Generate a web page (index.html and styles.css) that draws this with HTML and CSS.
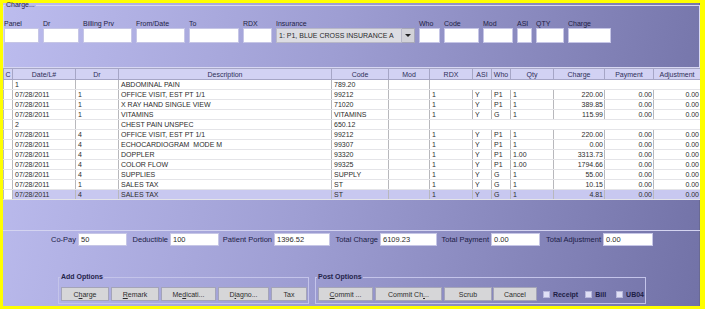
FILE: index.html
```html
<!DOCTYPE html>
<html>
<head>
<meta charset="utf-8">
<link rel="stylesheet" href="styles.css">
</head>
<body>
<div class="app">
  <fieldset class="charge">
    <legend>Charge...</legend>
    <div class="fields">
      <div class="f w-panel"><label>Panel</label><div class="inp"></div></div>
      <div class="f w-dr"><label>Dr</label><div class="inp"></div></div>
      <div class="f w-bill"><label>Billing Prv</label><div class="inp"></div></div>
      <div class="f w-from"><label>From/Date</label><div class="inp"></div></div>
      <div class="f w-to"><label>To</label><div class="inp"></div></div>
      <div class="f w-rdx"><label>RDX</label><div class="inp"></div></div>
      <div class="f w-ins"><label>Insurance</label>
        <div class="combo"><span class="combo-text">1: P1, BLUE CROSS INSURANCE A</span><span class="combo-btn"><span class="tri"></span></span></div>
      </div>
      <div class="f w-who"><label>Who</label><div class="inp"></div></div>
      <div class="f w-code"><label>Code</label><div class="inp"></div></div>
      <div class="f w-mod"><label>Mod</label><div class="inp"></div></div>
      <div class="f w-asi"><label>ASI</label><div class="inp"></div></div>
      <div class="f w-qty"><label>QTY</label><div class="inp"></div></div>
      <div class="f w-chg"><label>Charge</label><div class="inp"></div></div>
    </div>
  </fieldset>

  <div class="gridpane">
    <table class="grid">
      <colgroup>
        <col class="c-c"><col class="c-date"><col class="c-dr"><col class="c-desc"><col class="c-code"><col class="c-mod"><col class="c-rdx"><col class="c-asi"><col class="c-who"><col class="c-qty"><col class="c-chg"><col class="c-pay"><col class="c-adj">
      </colgroup>
      <thead>
        <tr><th>C</th><th>Date/L#</th><th>Dr</th><th>Description</th><th>Code</th><th>Mod</th><th>RDX</th><th>ASI</th><th>Who</th><th>Qty</th><th>Charge</th><th>Payment</th><th>Adjustment</th></tr>
      </thead>
      <tbody>
        <tr><td></td><td>1</td><td></td><td>ABDOMINAL PAIN</td><td>789.20</td><td></td><td colspan="7"></td></tr>
        <tr><td></td><td>07/28/2011</td><td>1</td><td>OFFICE VISIT, EST PT 1/1</td><td>99212</td><td></td><td>1</td><td>Y</td><td>P1</td><td>1</td><td class="n">220.00</td><td class="n">0.00</td><td class="n">0.00</td></tr>
        <tr><td></td><td>07/28/2011</td><td>1</td><td>X RAY HAND SINGLE VIEW</td><td>71020</td><td></td><td>1</td><td>Y</td><td>P1</td><td>1</td><td class="n">389.85</td><td class="n">0.00</td><td class="n">0.00</td></tr>
        <tr><td></td><td>07/28/2011</td><td>1</td><td>VITAMINS</td><td>VITAMINS</td><td></td><td>1</td><td>Y</td><td>G</td><td>1</td><td class="n">115.99</td><td class="n">0.00</td><td class="n">0.00</td></tr>
        <tr><td></td><td>2</td><td></td><td>CHEST PAIN UNSPEC</td><td>650.12</td><td></td><td colspan="7"></td></tr>
        <tr><td></td><td>07/28/2011</td><td>4</td><td>OFFICE VISIT, EST PT 1/1</td><td>99212</td><td></td><td>1</td><td>Y</td><td>P1</td><td>1</td><td class="n">220.00</td><td class="n">0.00</td><td class="n">0.00</td></tr>
        <tr><td></td><td>07/28/2011</td><td>4</td><td>ECHOCARDIOGRAM&nbsp; MODE M</td><td>99307</td><td></td><td>1</td><td>Y</td><td>P1</td><td>1</td><td class="n">0.00</td><td class="n">0.00</td><td class="n">0.00</td></tr>
        <tr><td></td><td>07/28/2011</td><td>4</td><td>DOPPLER</td><td>93320</td><td></td><td>1</td><td>Y</td><td>P1</td><td>1.00</td><td class="n">3313.73</td><td class="n">0.00</td><td class="n">0.00</td></tr>
        <tr><td></td><td>07/28/2011</td><td>4</td><td>COLOR FLOW</td><td>99325</td><td></td><td>1</td><td>Y</td><td>P1</td><td>1.00</td><td class="n">1794.66</td><td class="n">0.00</td><td class="n">0.00</td></tr>
        <tr><td></td><td>07/28/2011</td><td>4</td><td>SUPPLIES</td><td>SUPPLY</td><td></td><td>1</td><td>Y</td><td>G</td><td>1</td><td class="n">55.00</td><td class="n">0.00</td><td class="n">0.00</td></tr>
        <tr><td></td><td>07/28/2011</td><td>1</td><td>SALES TAX</td><td>ST</td><td></td><td>1</td><td>Y</td><td>G</td><td>1</td><td class="n">10.15</td><td class="n">0.00</td><td class="n">0.00</td></tr>
        <tr class="sel"><td class="c"></td><td>07/28/2011</td><td>4</td><td>SALES TAX</td><td>ST</td><td></td><td>1</td><td>Y</td><td>G</td><td>1</td><td class="n">4.81</td><td class="n">0.00</td><td class="n">0.00</td></tr>
      </tbody>
    </table>
  </div>

  <div class="totals">
    <span class="spacer"></span>
    <label>Co-Pay</label><div class="val">50</div>
    <label>Deductible</label><div class="val">100</div>
    <label>Patient Portion</label><div class="val">1396.52</div>
    <label>Total Charge</label><div class="val">6109.23</div>
    <label>Total Payment</label><div class="val">0.00</div>
    <label>Total Adjustment</label><div class="val">0.00</div>
  </div>

  <div class="options">
    <fieldset class="grp add">
      <legend>Add Options</legend>
      <button class="btn b-charge">C<u>h</u>arge</button>
      <button class="btn b-remark"><u>R</u>emark</button>
      <button class="btn b-med">Me<u>d</u>icati...</button>
      <button class="btn b-diag">D<u>i</u>agno...</button>
      <button class="btn b-tax">Tax</button>
    </fieldset>
    <fieldset class="grp post">
      <legend>Post Options</legend>
      <button class="btn b-commit"><u>C</u>ommit ...</button>
      <button class="btn b-commitch">Commit Ch<u>.</u>..</button>
      <button class="btn b-scrub">Scrub</button>
      <button class="btn b-cancel">Cancel</button>
      <span class="cb cb-receipt"><span class="box"></span>Receipt</span>
      <span class="cb cb-bill"><span class="box"></span>Bill</span>
      <span class="cb cb-ub"><span class="box"></span>UB04</span>
    </fieldset>
  </div>
</div>
</body>
</html>
```
FILE: styles.css
```css
* { box-sizing: border-box; }
html, body { margin: 0; padding: 0; }
body {
  width: 705px;
  height: 309px;
  overflow: hidden;
  font-family: "Liberation Sans", Arial, sans-serif;
  font-size: 7px;
  color: #1e1e44;
}
.app {
  width: 705px;
  height: 309px;
  border: 3px solid #ffff00;
  border-right-width: 5px;
  background: linear-gradient(100deg, #bcbcee 0%, #9e9ed3 45%, #7272a7 100%);
  box-shadow: inset -1px 0 0 #6a6a92;
  display: flex;
  flex-direction: column;
}

/* Charge fieldset */
.charge {
  margin: -2px 0 0 0;
  padding: 11px 0 0 0;
  height: 67px;
  border: 1px solid #d8d8f2;
  min-width: 0;
  flex: none;
}
.charge legend {
  padding: 0 1px;
  margin-left: 1px;
  line-height: 8px;
  font-size: 7px;
  color: #24244a;
}
.fields { display: flex; gap: 4px; }
.f { display: flex; flex-direction: column; }
.f label { line-height: 8px; height: 8px; white-space: nowrap; }
.inp { height: 15px; background: #fff; border: 1px solid #c6c6e6; }
.w-panel { width: 35px; }
.w-dr { width: 36px; }
.w-bill { width: 49px; }
.w-from { width: 49px; }
.w-to { width: 50px; }
.w-rdx { width: 29px; }
.w-ins { width: 139px; }
.w-who { width: 21px; }
.w-code { width: 35px; }
.w-mod { width: 30px; }
.w-asi { width: 15px; }
.w-qty { width: 28px; }
.w-chg { width: 43px; }
.combo { height: 15px; display: flex; }
.combo-text {
  flex: 1;
  background: #dcdce2;
  border: 1px solid #b8b8c8;
  line-height: 13px;
  padding-left: 2px;
  color: #2a2a2a;
  white-space: nowrap;
  overflow: hidden;
}
.combo-btn {
  width: 13px;
  background: #d2d2d8;
  border: 1px solid #a8a8b8;
  border-left: none;
  display: flex;
  align-items: center;
  justify-content: center;
}
.tri {
  width: 0; height: 0;
  border-left: 3px solid transparent;
  border-right: 3px solid transparent;
  border-top: 3px solid #222;
}

/* Grid */
.gridpane {
  height: 163px;
  border-bottom: 1px solid #d4d4f0;
  flex: none;
  overflow: hidden;
}
.grid {
  border-collapse: collapse;
  table-layout: fixed;
  width: 697px;
}
.c-c { width: 9px; }
.c-date { width: 63px; }
.c-dr { width: 43px; }
.c-desc { width: 213px; }
.c-code { width: 57px; }
.c-mod { width: 41px; }
.c-rdx { width: 43px; }
.c-asi { width: 19px; }
.c-who { width: 19px; }
.c-qty { width: 43px; }
.c-chg { width: 51px; }
.c-pay { width: 49px; }
.c-adj { width: 47px; }
.grid th {
  height: 11px;
  padding: 0;
  background: #d2d2f3;
  border: 1px solid #a6a6c6;
  font-weight: normal;
  font-size: 7px;
  line-height: 9px;
  color: #2e2e58;
  text-align: center;
  white-space: nowrap;
  overflow: hidden;
}
.grid td {
  height: 10px;
  padding: 0 0 0 2px;
  line-height: 9px;
  background: #fff;
  border-left: 1px solid #b8b8bc;
  border-right: 1px solid #b8b8bc;
  border-bottom: 1px solid #e4e4e8;
  color: #2c2c2c;
  white-space: nowrap;
  overflow: hidden;
}
.grid td.n { text-align: right; padding: 0 1px 0 0; }
.grid tr.sel td { background: #c8c8f0; }
.grid tr.sel td.c { background: #fff; }

/* Totals */
.totals {
  display: grid;
  grid-template-columns: 42px 33px 49px 43px 49px 55px 56px 50px 57px 54px 49px 63px 50px;
  margin-top: 2px;
  height: 13px;
  align-items: center;
  flex: none;
}
.totals label {
  justify-self: end;
  margin-right: 2px;
  font-size: 7.5px;
  white-space: nowrap;
  color: #1c1c46;
}
.totals .val {
  height: 13px;
  background: #fff;
  border: 1px solid #c6c6e6;
  padding-left: 2px;
  line-height: 11px;
  font-size: 7.5px;
  color: #2c2c2c;
}

/* Options */
.options {
  display: flex;
  gap: 6px;
  margin-top: 27px;
  padding-left: 55px;
  flex: none;
}
.grp {
  margin: 0;
  padding: 6px 1px 1px 2px;
  height: 31px;
  border: 1px solid #c4c4ea;
  display: flex;
  align-items: flex-start;
  gap: 2px;
  min-width: 0;
}
.grp legend {
  font-weight: bold;
  line-height: 8px;
  padding: 0 1px;
  margin-left: -1px;
  color: #24244a;
}
.add { width: 251px; }
.post { width: 331px; }
.btn {
  height: 14px;
  margin: 0;
  padding: 0;
  background: #d6d6d8;
  border: 1px solid #a4a4b8;
  font-family: "Liberation Sans", Arial, sans-serif;
  font-size: 7px;
  color: #2c2c2c;
  display: flex;
  align-items: center;
  justify-content: center;
}
.b-charge { width: 48px; }
.b-remark { width: 48px; }
.b-med { width: 55px; }
.b-diag { width: 51px; }
.b-tax { width: 36px; }
.b-commit { width: 55px; }
.b-commitch { width: 67px; }
.b-scrub { width: 48px; }
.b-cancel { width: 44px; margin-left: -1px; }
.cb {
  display: flex;
  align-items: center;
  gap: 3px;
  height: 14px;
  font-weight: bold;
  color: #1e1e46;
}
.cb-receipt { margin-left: 4px; }
.cb-bill { margin-left: 5px; }
.cb-ub { margin-left: 8px; }
.box {
  width: 7px;
  height: 7px;
  background: #e0e0f6;
  border: 1px solid #b8b8dc;
}
```
